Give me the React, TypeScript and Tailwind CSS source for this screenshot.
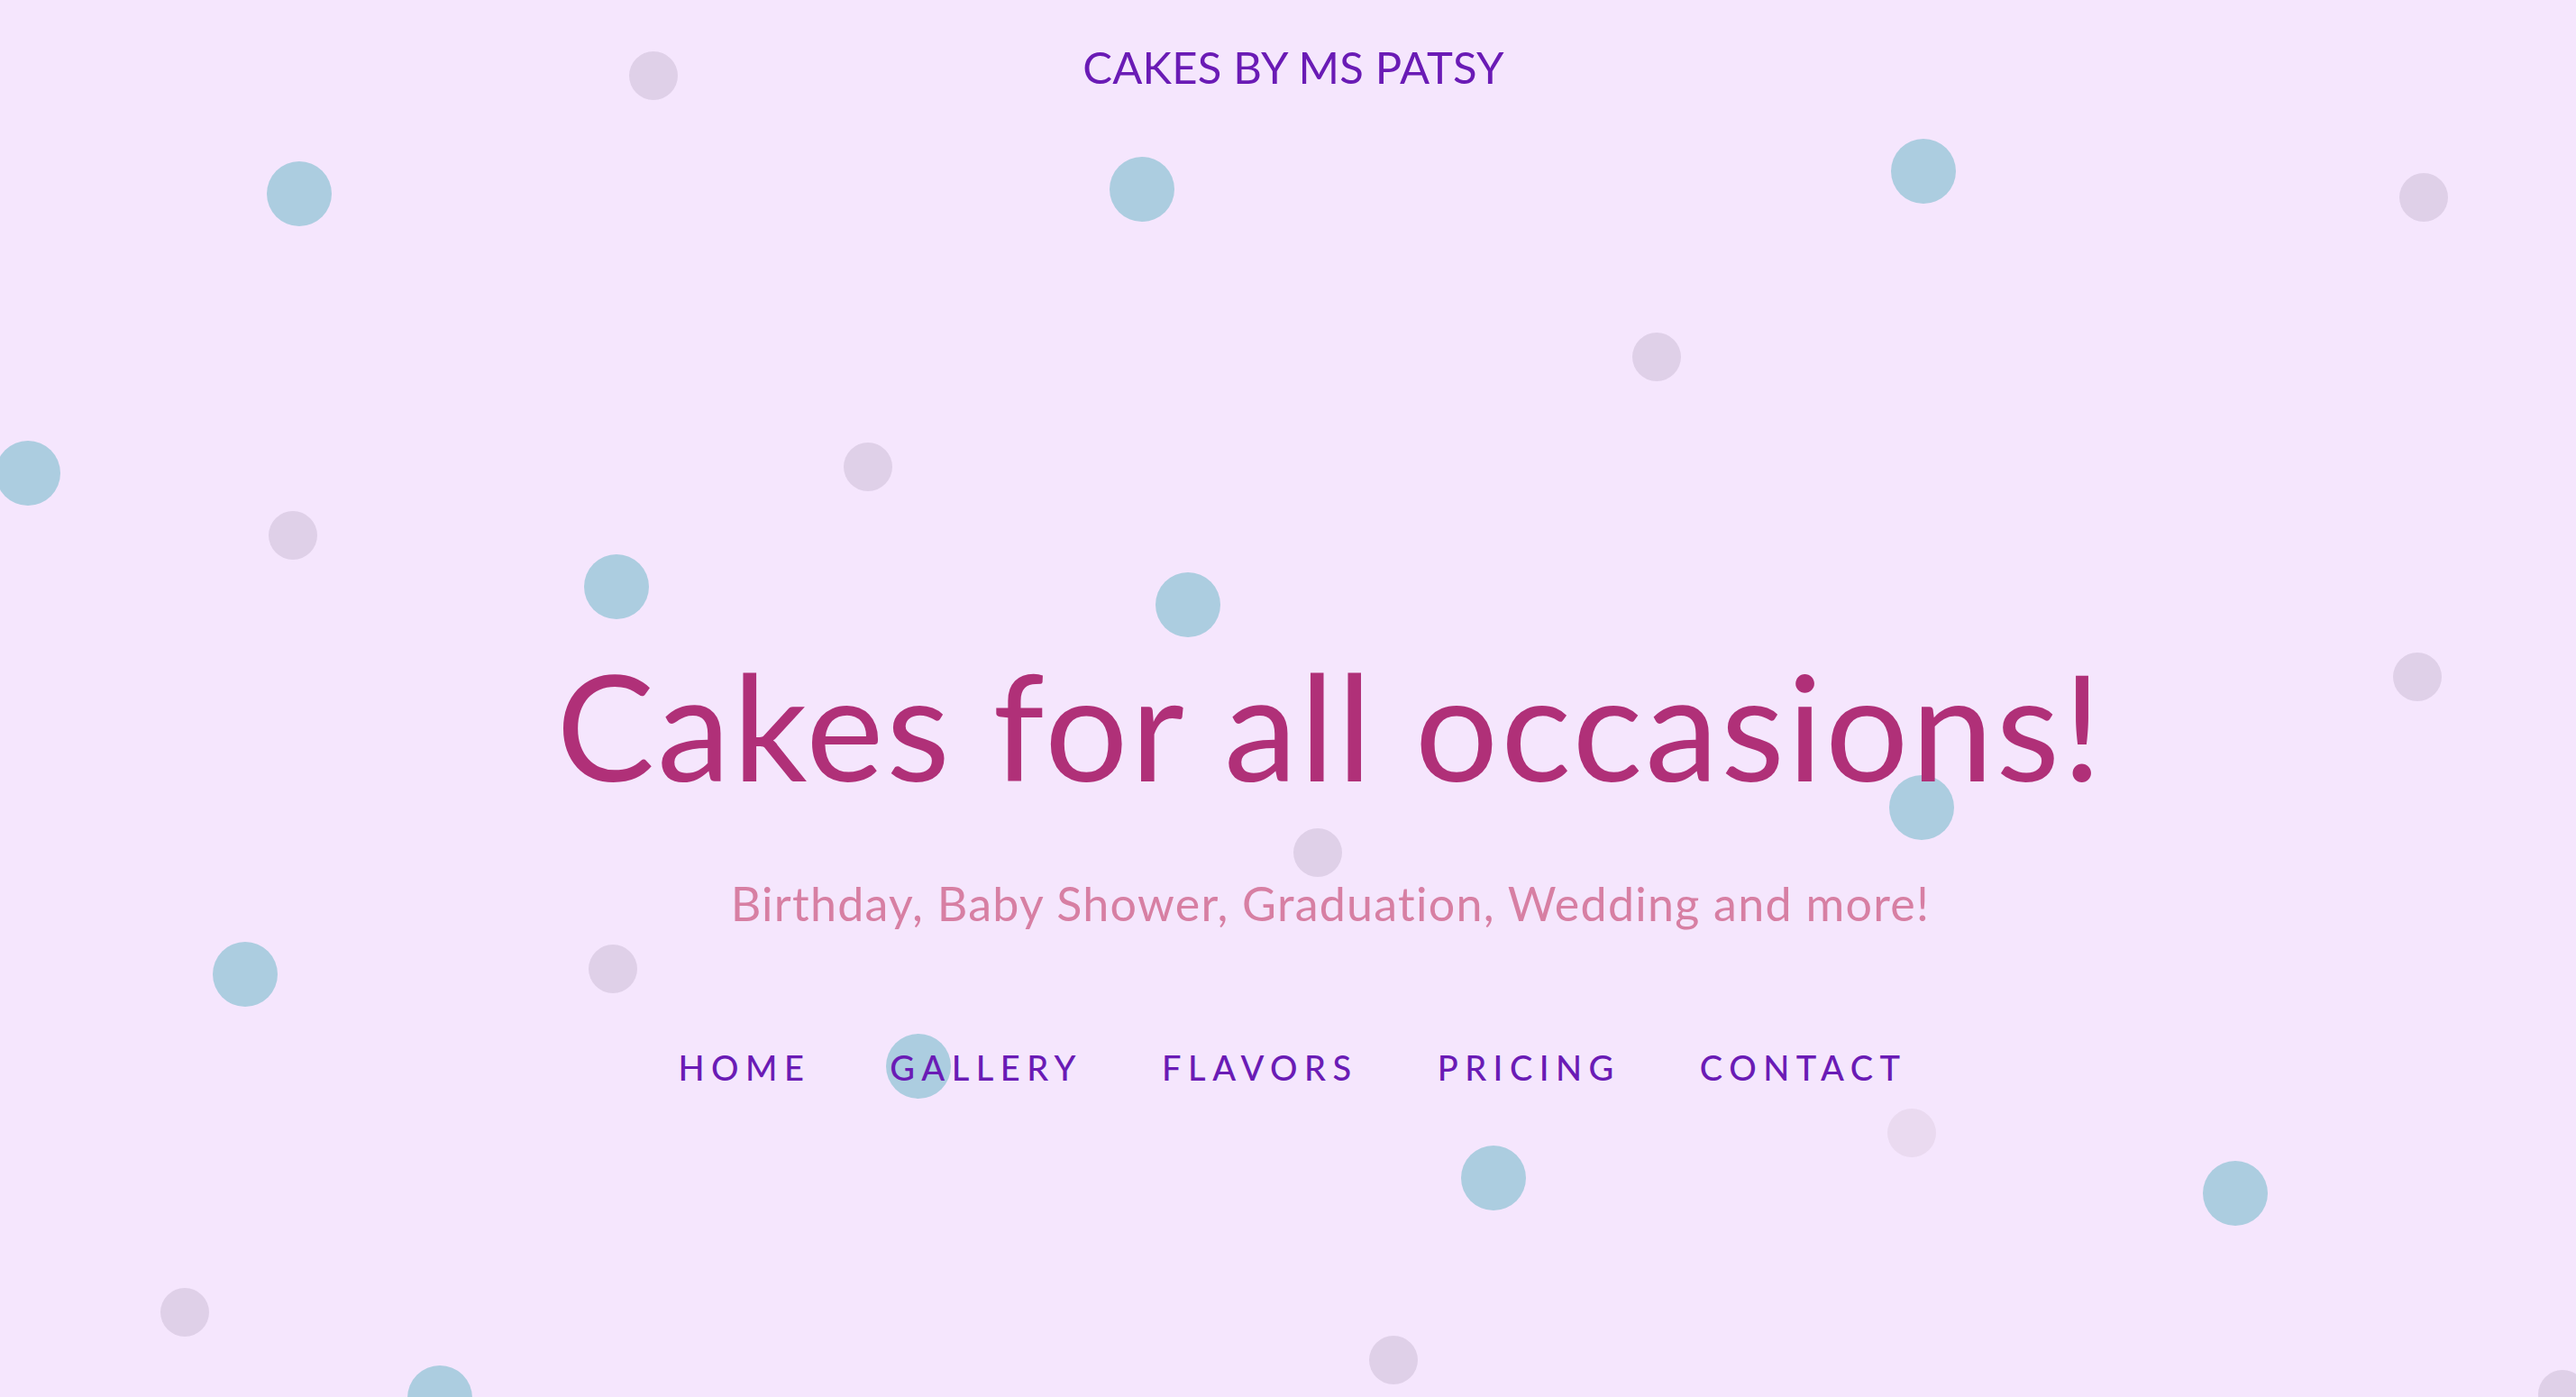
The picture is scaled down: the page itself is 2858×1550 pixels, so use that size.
import React from "react";

type Dot = { x: number; y: number; kind: "blue" | "lav" | "lav2" };

const dots: Dot[] = [
  { x: 332, y: 215, kind: "blue" },
  { x: 1267, y: 210, kind: "blue" },
  { x: 2134, y: 190, kind: "blue" },
  { x: 31, y: 525, kind: "blue" },
  { x: 684, y: 651, kind: "blue" },
  { x: 1318, y: 671, kind: "blue" },
  { x: 2132, y: 896, kind: "blue" },
  { x: 272, y: 1081, kind: "blue" },
  { x: 1019, y: 1183, kind: "blue" },
  { x: 1657, y: 1307, kind: "blue" },
  { x: 2480, y: 1324, kind: "blue" },
  { x: 488, y: 1551, kind: "blue" },
  { x: 725, y: 84, kind: "lav" },
  { x: 2689, y: 219, kind: "lav" },
  { x: 1838, y: 396, kind: "lav" },
  { x: 963, y: 518, kind: "lav" },
  { x: 325, y: 594, kind: "lav" },
  { x: 2682, y: 751, kind: "lav" },
  { x: 1462, y: 946, kind: "lav" },
  { x: 680, y: 1075, kind: "lav" },
  { x: 2121, y: 1257, kind: "lav2" },
  { x: 205, y: 1456, kind: "lav" },
  { x: 1546, y: 1509, kind: "lav" },
  { x: 2843, y: 1547, kind: "lav" },
];

function DotEl({ d }: { d: Dot }) {
  const size = d.kind === "blue" ? 72 : 54;
  const cls =
    d.kind === "blue"
      ? "bg-[#accde0]"
      : d.kind === "lav"
      ? "bg-[#dfd0e8]"
      : "bg-[#eadaf0]";
  return (
    <div
      className={`absolute rounded-full blur-[0.6px] ${cls}`}
      style={{ left: d.x - size / 2, top: d.y - size / 2, width: size, height: size }}
    />
  );
}

const navItems = ["HOME", "GALLERY", "FLAVORS", "PRICING", "CONTACT"];

export default function App() {
  return (
    <div
      className="relative w-full h-[1550px] overflow-hidden bg-[#f5e6fd]"
      style={{ fontFamily: "Lato, 'Noto Sans', sans-serif" }}
    >
      <div className="absolute inset-0">
        {dots.map((d, i) => (
          <DotEl key={i} d={d} />
        ))}
      </div>
      <div className="relative flex flex-col items-center">
        <div className="mt-[50px] text-[49px] leading-none font-normal text-[#6a1bb5] tracking-[0.2px] pl-[12px]">
          CAKES BY MS PATSY
        </div>
        <div className="flex flex-col items-center pl-[94px]">
          <h1 className="mt-[624px] text-[163px] leading-none font-normal text-[#b03078] tracking-[3px]">
            Cakes for all occasions!
          </h1>
          <p className="mt-[90px] text-[52px] leading-none font-normal text-[#d77fa3] tracking-[1.25px]">
            Birthday, Baby Shower, Graduation, Wedding and more!
          </p>
        </div>
        <nav className="mt-[137px] flex items-center gap-[88px] pl-[10px]">
          {navItems.map((n) => (
            <a
              key={n}
              className="text-[38px] leading-none font-medium text-[#6a1bb5] tracking-[7.5px]"
            >
              {n}
            </a>
          ))}
        </nav>
      </div>
    </div>
  );
}
